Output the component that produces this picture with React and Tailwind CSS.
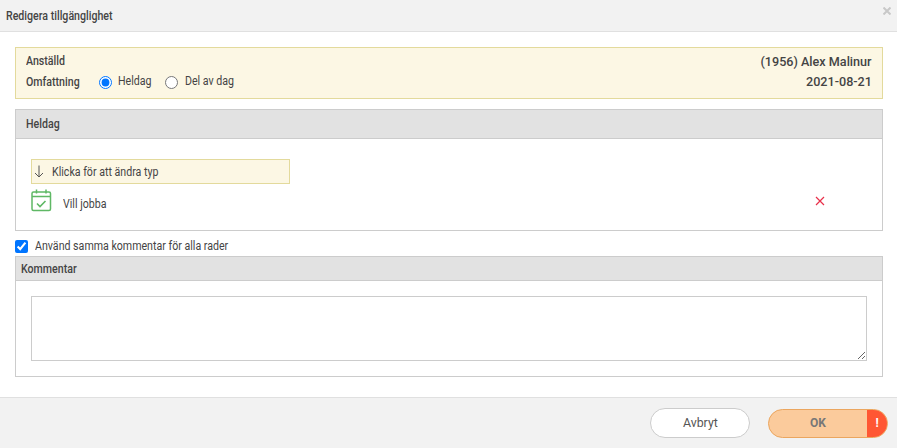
import React from 'react';

const CalendarCheck = () => (
  <svg width="21" height="23" viewBox="0 0 21 23" fill="none" stroke="#5fb865" strokeWidth="1.5">
    <rect x="1" y="3" width="18.5" height="18.5" rx="1.5" />
    <path d="M1 7.5h18.5M5.5 .5v4M15 .5v4" />
    <path d="M6 14.5l3 3 5.5-5.5" strokeWidth="1.6" />
  </svg>
);

// the app's font is narrower than Roboto, so squeeze the text a bit
const Txt = ({ className = '', children }) => (
  <span className={`inline-block origin-left scale-x-[0.885] whitespace-nowrap ${className}`}>{children}</span>
);

const Panel = ({ title, className, children }) => (
  <div className={`border border-[#cccccc] ${className}`}>
    <div className="bg-[#e2e2e2] border-b border-[#cccccc] flex items-center font-medium text-[#444]">{title}</div>
    {children}
  </div>
);

export default function App() {
  return (
    <div className="w-[897px] h-[448px] bg-white flex flex-col text-[12px] text-[#444] overflow-hidden font-['Roboto',sans-serif]">
      <div className="h-[32px] shrink-0 bg-[#f2f2f2] border-b border-[#e0e0e0] flex items-center justify-between pl-[6px] pr-[6px]">
        <Txt className="font-medium">Redigera tillgänglighet</Txt>
        <svg width="8" height="8" viewBox="0 0 8 8" stroke="#c8c8c8" strokeWidth="2" className="mb-[10px]">
          <path d="M.5 .5l7 7M7.5 .5l-7 7" />
        </svg>
      </div>

      <div className="flex-1 flex flex-col pl-[15px] pr-[14px] pt-[15px]">
        <div className="h-[52px] bg-[#fcf7e4] border border-[#e3da9c] flex justify-between pl-[10px] pr-[10px] pt-[5px]">
          <div className="font-medium">
            <div className="h-[17px] leading-[17px]"><Txt>Anställd</Txt></div>
            <div className="flex items-center h-[22px] mt-[1px]">
              <span className="w-[73px]"><Txt>Omfattning</Txt></span>
              <input type="radio" name="scope" defaultChecked className="w-[13px] h-[13px] accent-[#0075ff]" />
              <span className="font-normal w-[34px] ml-[6px] mb-[2px]"><Txt>Heldag</Txt></span>
              <input type="radio" name="scope" className="w-[13px] h-[13px] ml-[13px]" />
              <span className="font-normal ml-[7px] mb-[2px]"><Txt>Del av dag</Txt></span>
            </div>
          </div>
          <div className="font-medium text-right text-[13px]">
            <div className="h-[17px] leading-[17px]"><span className="inline-block origin-right scale-x-[0.97]">(1956) Alex Malinur</span></div>
            <div className="h-[22px] leading-[22px] mt-[1px]"><span className="inline-block origin-right scale-x-[0.97]">2021-08-21</span></div>
          </div>
        </div>

        <Panel title={<span className="pl-[10px]"><Txt>Heldag</Txt></span>} className="mt-[10px] h-[122px] [&>div:first-child]:h-[29px]">
          <div className="px-[15px] pt-[20px]">
            <div className="w-[259px] h-[25px] bg-[#fcf7e4] border border-[#e3da9c] flex items-center">
              <svg width="10" height="13" viewBox="0 0 10 13" fill="none" stroke="#555" strokeWidth="1" className="ml-[2px]">
                <path d="M5 .5v11.5M1 8l4 4 4-4" />
              </svg>
              <span className="ml-[8px]"><Txt>Klicka för att ändra typ</Txt></span>
            </div>
            <div className="flex items-center justify-between mt-[4px] h-[24px] pr-[42px]">
              <div className="flex items-center">
                <CalendarCheck />
                <span className="ml-[11px] mt-[7px]"><Txt>Vill jobba</Txt></span>
              </div>
              <svg width="10" height="10" viewBox="0 0 10 10" stroke="#e8304a" strokeWidth="1.2" className="mt-[2px]">
                <path d="M1 1l8 8M9 1l-8 8" />
              </svg>
            </div>
          </div>
        </Panel>

        <label className="flex items-center h-[16px] mt-[7px]">
          <input type="checkbox" defaultChecked className="w-[13px] h-[13px] accent-[#0075ff]" />
          <span className="ml-[7px]"><Txt>Använd samma kommentar för alla rader</Txt></span>
        </label>

        <Panel title={<span className="pl-[5px]"><Txt>Kommentar</Txt></span>} className="mt-[2px] h-[121px] [&>div:first-child]:h-[24px]">
          <div className="px-[15px] pt-[15px]">
            <textarea className="block w-full h-[65px] border border-[#cccccc] bg-white outline-none" />
          </div>
        </Panel>
      </div>

      <div className="h-[51px] shrink-0 bg-[#f2f2f2] border-t border-[#e0e0e0] flex items-center justify-end pr-[9px]">
        <button className="w-[100px] h-[30px] rounded-full bg-white border border-[#cccccc] text-[13px] text-[#555]">
          <span className="inline-block scale-x-[0.95]">Avbryt</span>
        </button>
        <div className="ml-[18px] w-[120px] h-[29px] rounded-full bg-[#fbcb9c] border border-[#eba65f] flex overflow-hidden font-bold text-[#777]">
          <span className="flex-1 flex items-center justify-center">OK</span>
          <span className="w-[20px] bg-[#ff5733] text-white flex items-center justify-center">!</span>
        </div>
      </div>
    </div>
  );
}
